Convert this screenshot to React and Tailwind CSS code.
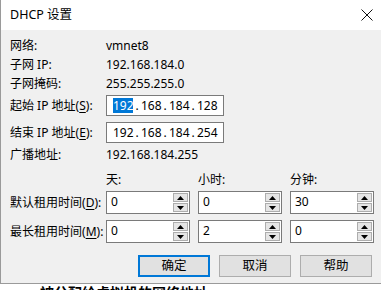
import React from 'react';

const FONT = { fontFamily: '"Noto Sans", "Noto Sans CJK SC", sans-serif' };

function Label({ text, mnemonic, rest }) {
  return (
    <span className="w-[96px] shrink-0 whitespace-nowrap">
      {text}
      {mnemonic && (
        <>
          (<span className="underline underline-offset-2">{mnemonic}</span>){rest}
        </>
      )}
      {!mnemonic && rest}
    </span>
  );
}

function IpField({ parts, selected }) {
  return (
    <div className="flex items-center w-[118px] h-[21px] bg-white border border-[#7a7a7a] pl-[6px]">
      {parts.map((p, i) => (
        <React.Fragment key={i}>
          <span
            className={
              'w-[20px] text-center leading-[15px] ' +
              (selected && i === 0 ? 'bg-[#0078d7] text-white' : '')
            }
          >
            {p}
          </span>
          {i < parts.length - 1 && <span className="w-[8px] text-center">.</span>}
        </React.Fragment>
      ))}
    </div>
  );
}

function SpinBox({ value }) {
  return (
    <div className="flex items-stretch w-[84px] h-[23px] bg-white border border-[#7a7a7a]">
      <span className="flex-1 pl-[4px] leading-[20px]">{value}</span>
      <div className="flex flex-col gap-[1px] py-[1px] pr-[1px] w-[16px]">
        <div className="flex-1 flex items-center justify-center bg-[#e5e5e5] border border-[#adadad]">
          <svg width="7" height="4" viewBox="0 0 7 4">
            <path d="M0 4 L3.5 0 L7 4 Z" fill="#000" />
          </svg>
        </div>
        <div className="flex-1 flex items-center justify-center bg-[#e5e5e5] border border-[#adadad]">
          <svg width="7" height="4" viewBox="0 0 7 4">
            <path d="M0 0 L3.5 4 L7 0 Z" fill="#000" />
          </svg>
        </div>
      </div>
    </div>
  );
}

export default function App() {
  return (
    <div className="w-[381px] h-[290px] overflow-hidden bg-white text-[12px] text-black" style={FONT}>
      <div className="border-l border-[#9a9a9a] border-b">
        {/* title bar */}
        <div className="h-[30px] bg-white flex items-center justify-between pl-[9px] pr-[8px]">
          <span className="text-[12.5px]">DHCP 设置</span>
          <svg width="12" height="12" viewBox="0 0 12 12">
            <path d="M0.5 0.5 L11.5 11.5 M11.5 0.5 L0.5 11.5" stroke="#111" strokeWidth="1" />
          </svg>
        </div>

        {/* body */}
        <div className="h-[253px] bg-[#f0f0f0] pl-[9px] pt-[6px]">
          <div className="flex items-center h-[19px]">
            <Label text="网络:" />
            <span>vmnet8</span>
          </div>
          <div className="flex items-center h-[19px]">
            <Label text="子网 IP:" />
            <span>192.168.184.0</span>
          </div>
          <div className="flex items-center h-[19px]">
            <Label text="子网掩码:" />
            <span>255.255.255.0</span>
          </div>

          <div className="flex items-center mt-[2px]">
            <Label text="起始 IP 地址" mnemonic="S" rest=":" />
            <IpField parts={['192', '168', '184', '128']} selected />
          </div>
          <div className="flex items-center mt-[6px]">
            <Label text="结束 IP 地址" mnemonic="E" rest=":" />
            <IpField parts={['192', '168', '184', '254']} />
          </div>
          <div className="flex items-center h-[19px] mt-[2px]">
            <Label text="广播地址:" />
            <span>192.168.184.255</span>
          </div>

          <div className="flex items-center h-[19px] mt-[6px] pl-[96px] gap-[8px]">
            <span className="w-[84px]">天:</span>
            <span className="w-[84px]">小时:</span>
            <span className="w-[84px]">分钟:</span>
          </div>
          <div className="flex items-center mt-[2px]">
            <Label text="默认租用时间" mnemonic="D" rest=":" />
            <div className="flex gap-[8px]">
              <SpinBox value="0" />
              <SpinBox value="0" />
              <SpinBox value="30" />
            </div>
          </div>
          <div className="flex items-center mt-[6px]">
            <Label text="最长租用时间" mnemonic="M" rest=":" />
            <div className="flex gap-[8px]">
              <SpinBox value="0" />
              <SpinBox value="2" />
              <SpinBox value="0" />
            </div>
          </div>

          <div className="flex justify-end gap-[9px] pr-[9px] mt-[12px]">
            <button className="w-[72px] h-[22px] bg-[#e1e1e1] border-2 border-[#0078d7] text-[12.5px]">确定</button>
            <button className="w-[72px] h-[22px] bg-[#e1e1e1] border border-[#adadad] text-[12.5px]">取消</button>
            <button className="w-[72px] h-[22px] bg-[#e1e1e1] border border-[#adadad] text-[12.5px]">帮助</button>
          </div>
        </div>
      </div>

      {/* window behind, mostly hidden */}
      <div className="h-[6px] overflow-hidden pl-[40px]">
        <div className="text-[14px] leading-[16px] mt-[1px] font-bold">被分配给虚拟机的网络地址</div>
      </div>
    </div>
  );
}
